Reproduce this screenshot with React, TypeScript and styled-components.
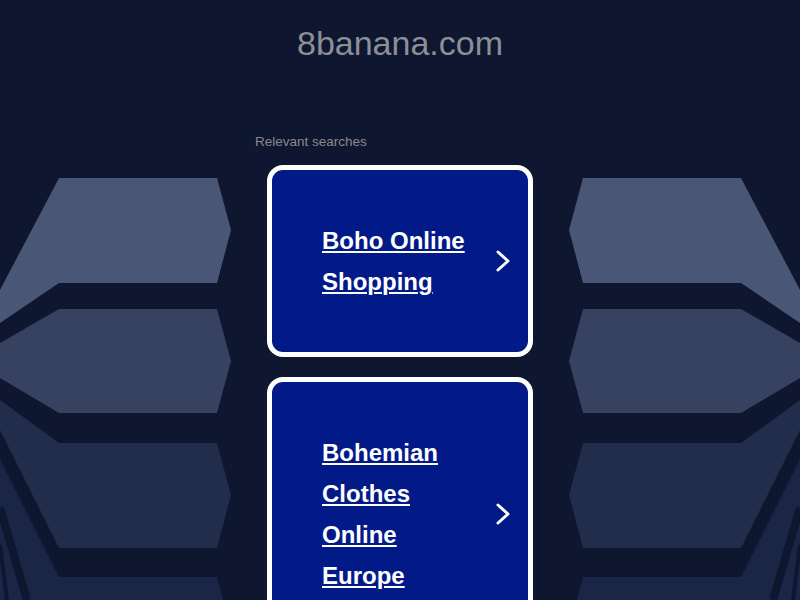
import React from 'react'
import styled, { createGlobalStyle } from 'styled-components'

const GlobalStyle = createGlobalStyle`
  html, body {
    margin: 0;
    padding: 0;
    background: #0e1630;
  }
  * {
    box-sizing: border-box;
  }
`

const Page = styled.div`
  position: relative;
  height: 100vh;
  overflow: hidden;
  background: #0e1630;
  font-family: 'Liberation Sans', Arial, sans-serif;
`

const Decor = styled.svg`
  position: absolute;
  top: 0;
  left: 0;
  width: 800px;
  height: 600px;
  pointer-events: none;
`

const Content = styled.div`
  position: relative;
  display: flex;
  flex-direction: column;
  align-items: center;
`

const Title = styled.h1`
  margin: 23px 0 0;
  font-size: 34px;
  line-height: 40px;
  font-weight: 400;
  color: #8c9096;
`

const Results = styled.div`
  width: 290px;
  margin-top: 71px;
`

const Label = styled.div`
  font-size: 13.5px;
  line-height: 16px;
  color: #8a8a8a;
`

const List = styled.div`
  display: flex;
  flex-direction: column;
  gap: 20px;
  margin: 15px 12px 0;
`

const Card = styled.a`
  display: flex;
  align-items: center;
  padding: 50px 18px 50px 50px;
  background: #011a88;
  border: 5px solid #ffffff;
  border-radius: 16px;
  text-decoration: none;
`

const CardText = styled.span`
  width: 155px;
  font-size: 24px;
  line-height: 41px;
  font-weight: 700;
  color: #ffffff;
  text-decoration: underline;
  text-decoration-thickness: 2px;
  text-underline-offset: 2px;
`

const Chevron = styled.svg`
  margin-left: auto;
  flex-shrink: 0;
`

const searches = ['Boho Online Shopping', 'Bohemian Clothes Online Europe']

// one side of the panel pattern, mirrored for the right
const Panels = () => (
  <>
    <polygon fill='#4a5675' points='59,178 217,178 231,230 217,283 59,283 0,323 0,290' />
    <polygon fill='#364260' points='59,309 217,309 231,361 217,413 59,413 0,378 0,343' />
    <polygon fill='#222d4b' points='59,443 217,443 231,495 217,548 59,548 0,430 0,400' />
    <polygon fill='#1b2546' points='0,459 59,577 217,577 223,600 0,600' />
    <line x1='0' y1='508' x2='27' y2='600' stroke='#0e1630' strokeWidth='8' />
    <line x1='0' y1='545' x2='7' y2='600' stroke='#0e1630' strokeWidth='4' />
  </>
)

export default function App() {
  return (
    <Page>
      <GlobalStyle />
      <Decor viewBox='0 0 800 600'>
        <Panels />
        <g transform='translate(800 0) scale(-1 1)'>
          <Panels />
        </g>
      </Decor>
      <Content>
        <Title>8banana.com</Title>
        <Results>
          <Label>Relevant searches</Label>
          <List>
            {searches.map((s) => (
              <Card key={s} href='#'>
                <CardText>{s}</CardText>
                <Chevron width='14' height='22' viewBox='0 0 14 22'>
                  <polyline
                    points='2,2 12,11 2,20'
                    fill='none'
                    stroke='#ffffff'
                    strokeWidth='3'
                    strokeLinecap='round'
                    strokeLinejoin='round'
                  />
                </Chevron>
              </Card>
            ))}
          </List>
        </Results>
      </Content>
    </Page>
  )
}
